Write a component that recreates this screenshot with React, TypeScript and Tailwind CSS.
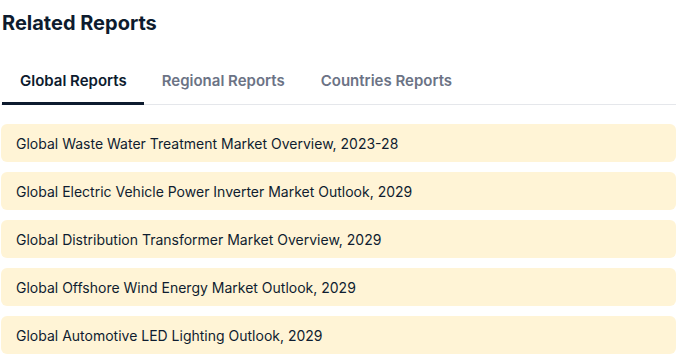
const tabs = ['Global Reports', 'Regional Reports', 'Countries Reports'];

const reports = [
  'Global Waste Water Treatment Market Overview, 2023-28',
  'Global Electric Vehicle Power Inverter Market Outlook, 2029',
  'Global Distribution Transformer Market Overview, 2029',
  'Global Offshore Wind Energy Market Outlook, 2029',
  'Global Automotive LED Lighting Outlook, 2029',
];

export default function App() {
  return (
    <div className="w-[685px] h-[357px] bg-white font-['Inter',sans-serif] pl-[1px] pr-[9px]">
      <h2 className="pt-[9px] pl-[1px] text-[20px] leading-[28px] font-bold text-[#0d1b2e]">Related Reports</h2>

      {/* Tabs */}
      <div className="mt-[33px] flex border-b border-[#e5e7eb]">
        {tabs.map((tab, i) => (
          <button
            key={tab}
            className={
              i === 0
                ? 'ml-[1px] pl-[18px] pr-[17px] pb-[10px] text-[15px] leading-[22px] font-semibold text-[#0d1b2e] border-b-[3px] border-[#0d1b2e] -mb-[1px]'
                : 'px-[18px] pb-[10px] text-[15px] leading-[22px] font-semibold text-[#6b7385] border-b-[3px] border-transparent -mb-[1px]'
            }
          >
            {tab}
          </button>
        ))}
      </div>

      <ul className="mt-[19px] flex flex-col gap-[10px]">
        {reports.map((r) => (
          <li
            key={r}
            className="h-[38px] flex items-center px-[15px] rounded-[6px] bg-[#fff4d6] text-[14px] text-[#0f1d30]"
          >
            {r}
          </li>
        ))}
      </ul>
    </div>
  );
}
